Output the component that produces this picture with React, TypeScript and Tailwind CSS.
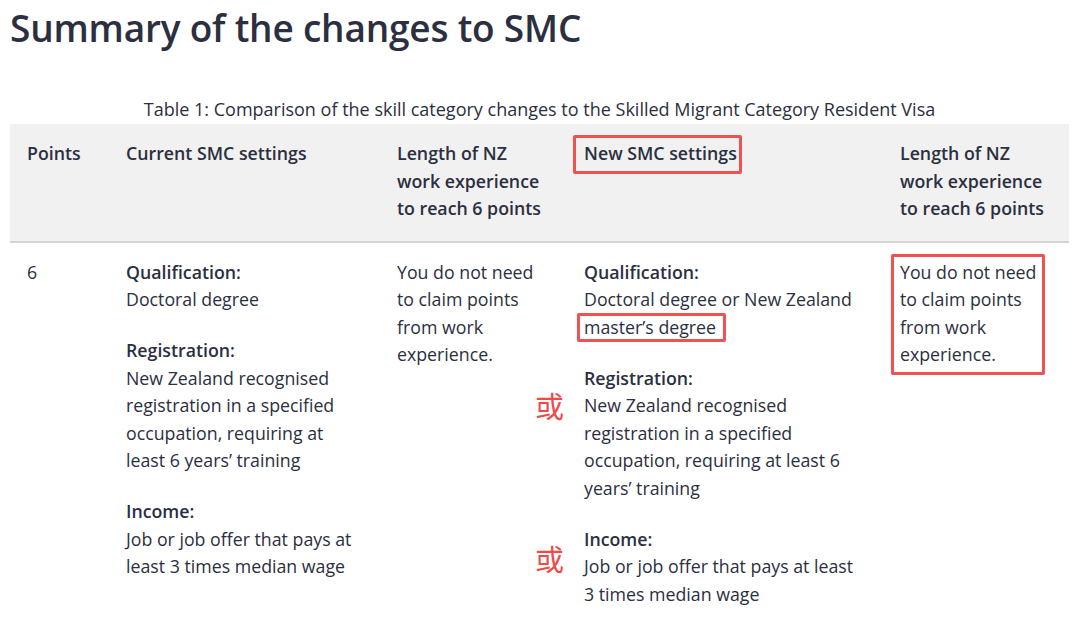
import React from "react";

const font = { fontFamily: '"Open Sans", "Noto Sans CJK SC", sans-serif' };

function Box({ children, cls }: { children: React.ReactNode; cls: string }) {
  return (
    <span className="relative inline-block">
      {children}
      <span className={`pointer-events-none absolute border-[3px] border-[#f05252] rounded-[2px] ${cls}`} />
    </span>
  );
}

function Or({ cls }: { cls: string }) {
  return (
    <span
      className={`absolute text-[29px] leading-none text-[#ee4a4a] ${cls}`}
      style={{ fontFamily: '"Noto Sans CJK SC", sans-serif' }}
    >
      或
    </span>
  );
}

export default function App() {
  return (
    <div className="w-[1080px] h-[622px] overflow-hidden bg-white text-[#2b2f3f]" style={font}>
      <h1 className="pl-[10px] pt-[4px] text-[37px] leading-[48px] font-semibold tracking-[-0.2px]">
        Summary of the changes to SMC
      </h1>
      <div className="pl-[10px] pr-[11px] pt-[45px]">
        <div className="text-center text-[18px] leading-[24px] pb-[3px]">
          Table 1: Comparison of the skill category changes to the Skilled Migrant Category Resident Visa
        </div>
        <table className="w-full table-fixed border-collapse text-[17.75px] leading-[27.5px]">
          <colgroup>
            <col className="w-[99px]" />
            <col className="w-[271px]" />
            <col className="w-[187px]" />
            <col className="w-[316px]" />
            <col className="w-[186px]" />
          </colgroup>
          <thead>
            <tr className="bg-[#f1f1f1] border-b-2 border-[#d4d4d4] align-top text-left">
              <th className="px-[17px] pt-[16px] pb-[18px] font-semibold">Points</th>
              <th className="px-[17px] pt-[16px] pb-[18px] font-semibold">Current SMC settings</th>
              <th className="px-[17px] pt-[16px] pb-[18px] font-semibold">Length of NZ work experience to reach 6 points</th>
              <th className="px-[17px] pt-[16px] pb-[18px] font-semibold">
                <Box cls="-left-[11px] -right-[5px] -top-[5px] -bottom-[6px]">New SMC settings</Box>
              </th>
              <th className="px-[17px] pt-[16px] pb-[18px] font-semibold">Length of NZ work experience to reach 6 points</th>
            </tr>
          </thead>
          <tbody>
            <tr className="align-top">
              <td className="px-[17px] pt-[16px]">6</td>
              <td className="px-[17px] pt-[16px]">
                <div className="font-semibold">Qualification:</div>
                <div>Doctoral degree</div>
                <div className="font-semibold mt-[23.5px]">Registration:</div>
                <div>New Zealand recognised registration in a specified occupation, requiring at least 6 years’ training</div>
                <div className="font-semibold mt-[23.5px]">Income:</div>
                <div>Job or job offer that pays at least 3 times median wage</div>
              </td>
              <td className="px-[17px] pt-[16px]">You do not need to claim points from work experience.</td>
              <td className="px-[17px] pt-[16px] relative">
                <div className="font-semibold">Qualification:</div>
                <div>
                  Doctoral degree or New Zealand{" "}
                  <Box cls="-left-[7px] -right-[10px] -top-[1px] -bottom-[1px]">master’s degree</Box>
                </div>
                <div className="relative">
                  <div className="font-semibold mt-[23.5px]">Registration:</div>
                  <div className="relative">
                    <Or cls="-left-[49px] -top-[1px]" />
                    New Zealand recognised registration in a specified occupation, requiring at least 6 years’ training
                  </div>
                </div>
                <div className="font-semibold mt-[23.5px]">Income:</div>
                <div className="relative">
                  <Or cls="-left-[49px] -top-[9px]" />
                  Job or job offer that pays at least 3 times median wage
                </div>
              </td>
              <td className="px-[17px] pt-[16px]">
                <Box cls="-left-[9px] -right-[5px] -top-[5px] -bottom-[6px]">
                  <span className="block w-[140px]">You do not need to claim points from work experience.</span>
                </Box>
              </td>
            </tr>
          </tbody>
        </table>
      </div>
    </div>
  );
}
